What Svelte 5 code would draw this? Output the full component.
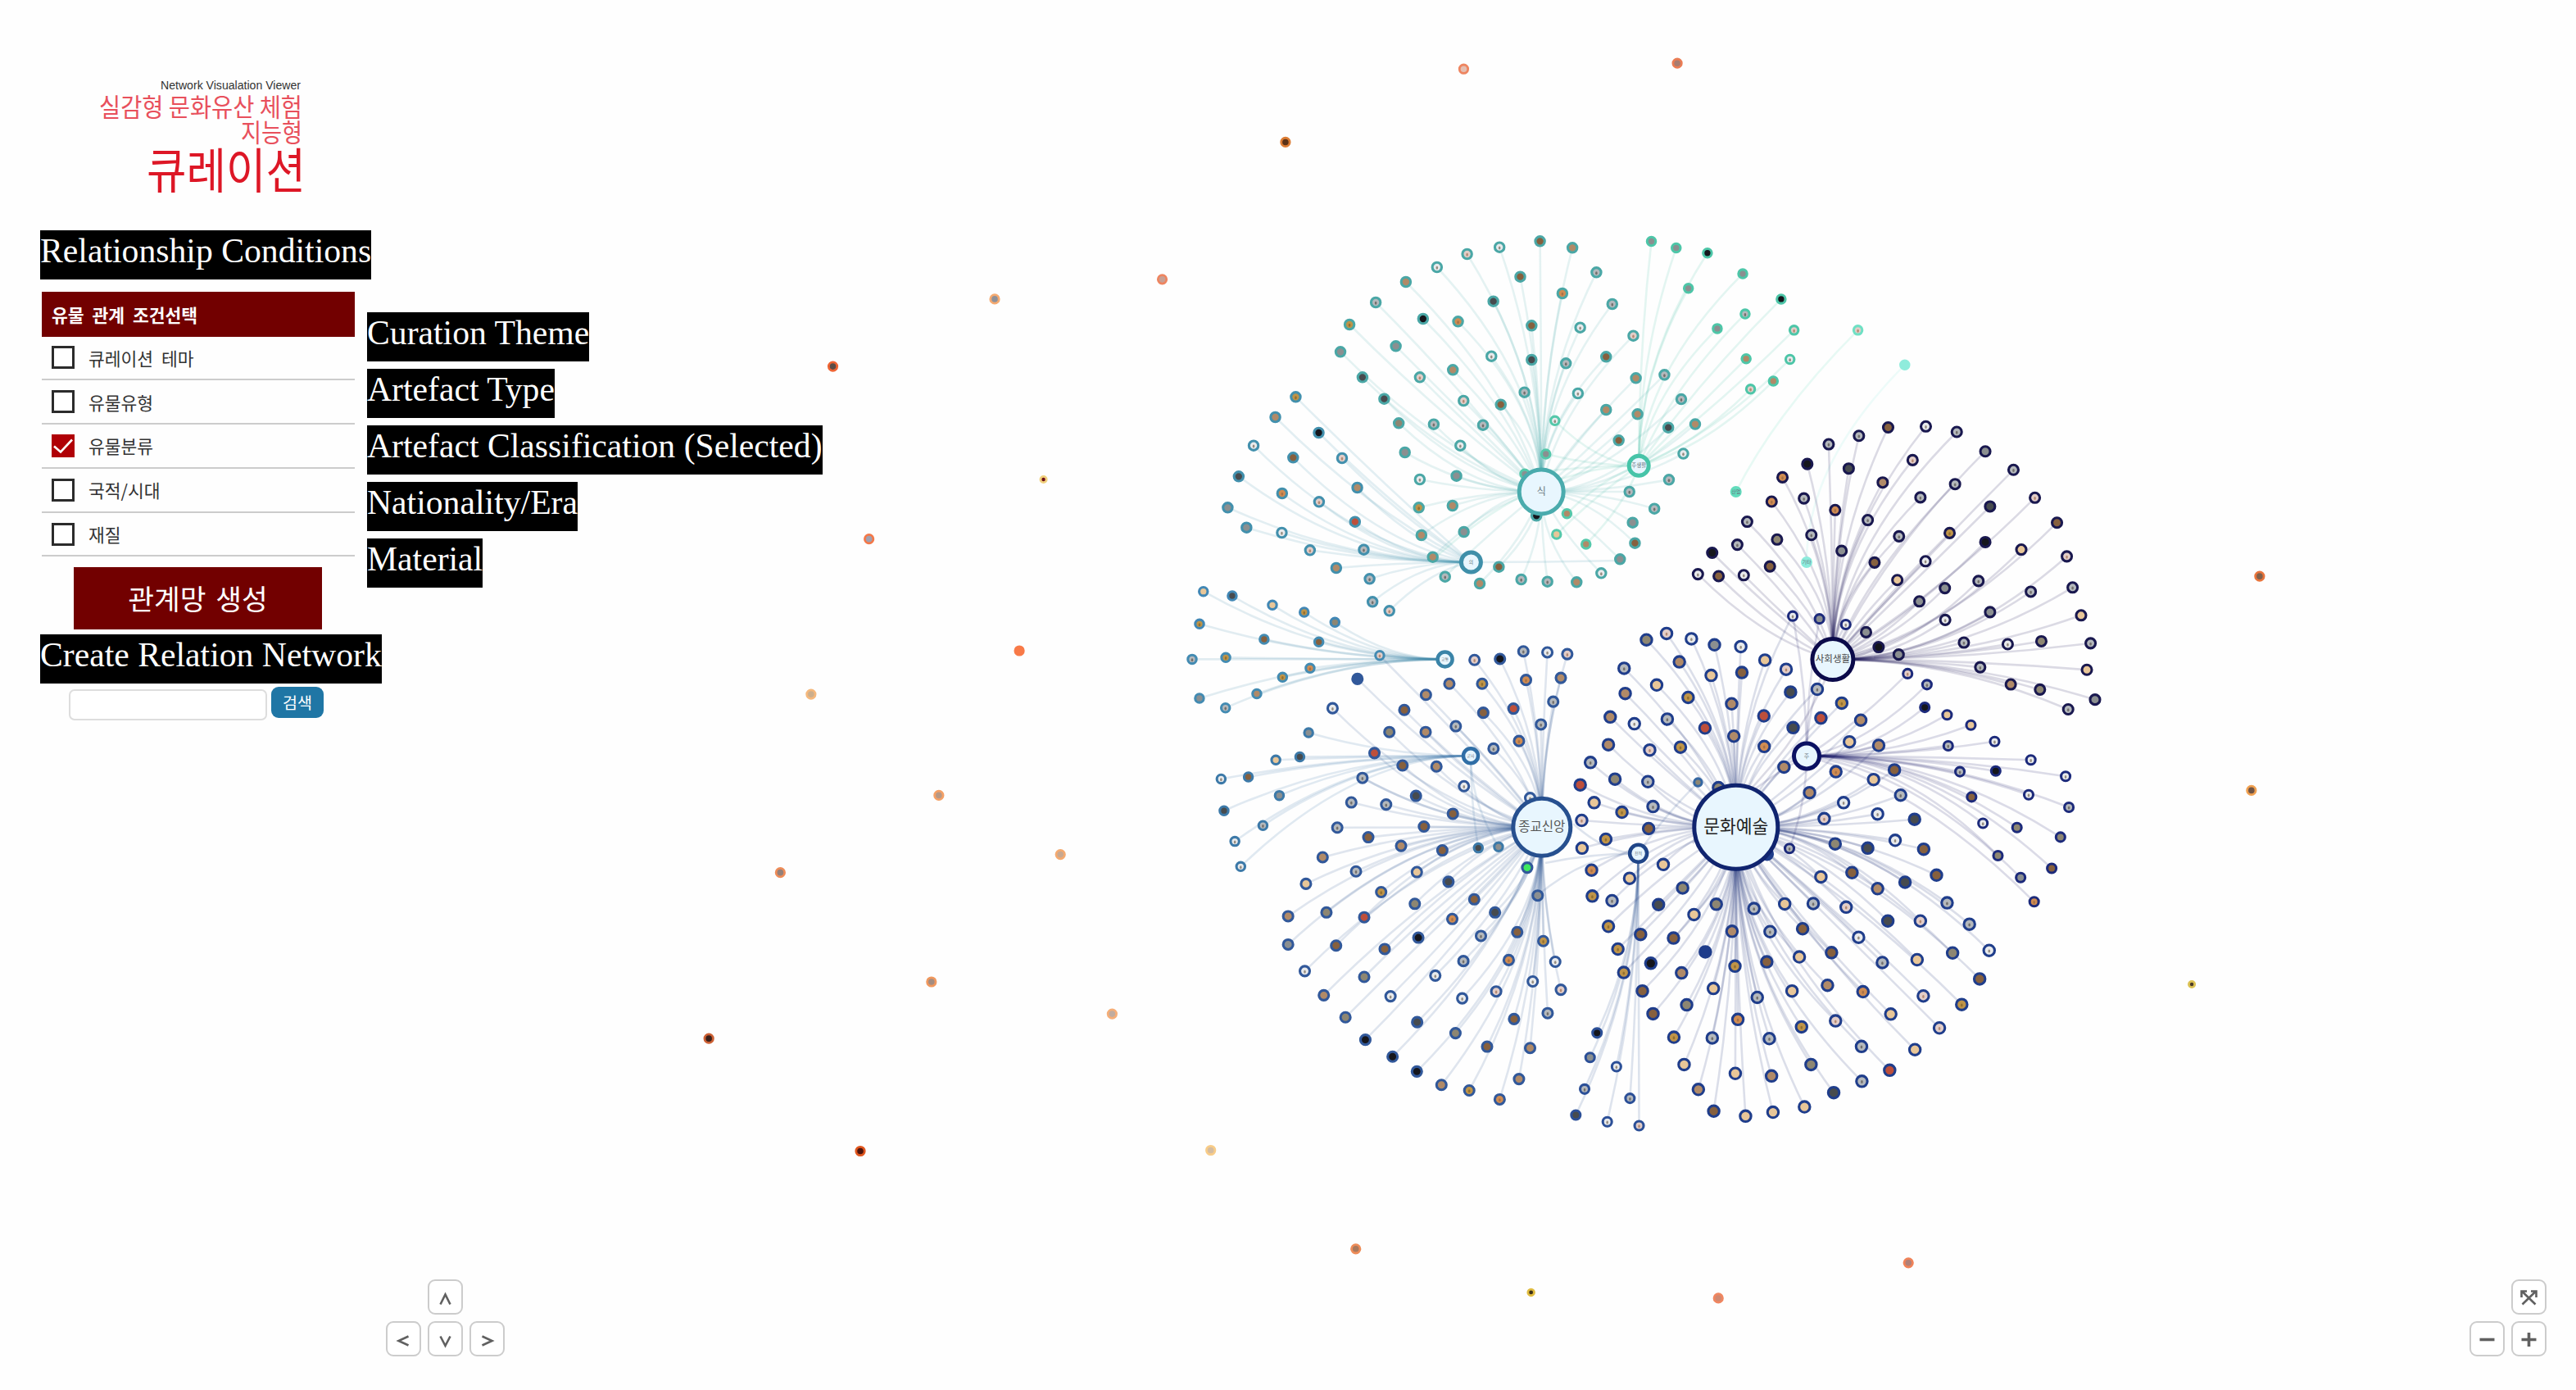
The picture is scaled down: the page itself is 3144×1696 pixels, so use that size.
<script lang="ts">
  interface Hub {
    x: number;
    y: number;
    r: number;
    w: number;
    color: string;
    label: string;
    size: number;
    ink?: string;
  }

  interface Group {
    hub: string;
    ring: string;
    r: number;
    // origin and scale of the tile the points are stored in
    tile: [number, number, number, number];
    points: string;
  }

  interface Dot {
    x: number;
    y: number;
    r: number;
    ring: string;
    fill: string;
    speck: string | null;
  }

  const A: Group["tile"] = [1430, 270, 2.529, 3];
  const B: Group["tile"] = [1950, 270, 2.412, 2.529];
  const C: Group["tile"] = [1430, 740, 2.8, 2.376];
  const D: Group["tile"] = [1880, 720, 2.24, 2.306];

  const hubs: Record<string, Hub> = {
    food: { x: 1881.2, y: 600, r: 27, w: 5, color: "#4aabad", label: "식", size: 12 },
    house: { x: 2000.2, y: 568.3, r: 12, w: 5, color: "#46c4a8", label: "주생활", size: 6.5 },
    tool: { x: 1795.4, y: 686, r: 12, w: 5, color: "#3f8fa9", label: "의", size: 6 },
    trade: { x: 1763.6, y: 804.4, r: 9, w: 4.5, color: "#3a84a8", label: "교통", size: 5 },
    army: { x: 1795, y: 922.3, r: 9, w: 4.5, color: "#2f6ea6", label: "군사", size: 5 },
    faith: { x: 1881.8, y: 1009.2, r: 35, w: 5, color: "#27508f", label: "종교신앙", size: 15.5, ink: "#555" },
    text: { x: 1999.6, y: 1041.3, r: 10.5, w: 4.5, color: "#1f4588", label: "전적", size: 5 },
    art: { x: 2118.8, y: 1009.2, r: 51, w: 5, color: "#10246f", label: "문화예술", size: 21.5, ink: "#222" },
    life: { x: 2205, y: 922.4, r: 15.5, w: 5, color: "#0b1162", label: "주", size: 7 },
    social: { x: 2236.9, y: 804.6, r: 25, w: 5, color: "#0b0a4a", label: "사회생활", size: 11.5, ink: "#444" },
    craft: { x: 2118.7, y: 600, r: 5, w: 4, color: "#62dcbc", label: "산업", size: 6 },
    misc: { x: 2205, y: 686, r: 5, w: 4, color: "#8cecdc", label: "기타", size: 6 },
  };

  const fills: Record<string, string> = {
    w: "#e8eaec",
    l: "#b4b8bc",
    g: "#8b8f90",
    o: "#d08c52",
    b: "#86603e",
    t: "#e8c698",
    y: "#bf9448",
    m: "#8d8672",
    d: "#474b4e",
    k: "#15161c",
    r: "#bd4f3b",
    p: "#e2cdc8",
    n: "#3fe860",
    c: "#b08a68",
  };

  const specks: Record<string, string> = { w: "#958c80", l: "#73706c", p: "#b58a72", o: "#a87248", y: "#94702f" };

  const groups: Group[] = [
    {
      hub: "food",
      ring: "#4aa7a6",
      r: 7,
      tile: A,
      points:
        "1137,73b 1237,97c 1012,95w 912,120p 819,168w 723,222c 630,297l 549,378y 521,478g 589,571d 1076,203b 1311,187l 1206,264o 993,293d 776,357k 884,367o 1360,303l 1111,382b 1261,389w 1425,419p 692,457g 987,494w 1111,507d 1217,520l 1341,496b 868,544c 766,571p 1433,574c 1521,562l 1089,626l 1254,630w 901,657p 1016,671b 656,650d 1341,690c 1438,706c 701,739m 809,743l 961,746l 720,846g 891,821w 879,932g 766,945w 763,1048y 867,1041c 1380,802b 1533,755d 1413,990l 1535,946l 1490,1052l 1423,1103g 1430,1178b 1384,1237g 771,1149c 902,1137g 806,1229c 844,1301l 951,1326c 1010,1265b 1079,1311l 1160,1319l 1250,1321c 1326,1288w 1126,1078k",
    },
    {
      hub: "food",
      ring: "#4aa7a6",
      r: 7,
      tile: B,
      points: "246,549l 287,626c 252,717w",
    },
    {
      hub: "house",
      ring: "#4dc6a8",
      r: 6.5,
      tile: B,
      points:
        "158,62g 231,82g 323,98k 267,207g 427,162g 434,286l 540,240k 352,331g 578,336p 437,424c 566,426w 517,493c 450,518p",
    },
    {
      hub: "house",
      ring: "#55c8aa",
      r: 6.5,
      tile: A,
      points: "1183,730w 1155,852g 1090,925g 1220,1070c 1188,1146t 1279,1182c",
    },
    { hub: "craft", ring: "#6fe0c4", r: 6.5, tile: B, points: "766,336p" },
    { hub: "misc", ring: "#8fecdc", r: 6.5, tile: B, points: "904,443s" },
    {
      hub: "tool",
      ring: "#4290ad",
      r: 7,
      tile: A,
      points:
        "383,643y 320,717c 454,774k 253,821w 375,865b 526,867p 207,934d 573,975c 341,996o 455,1027p 173,1048g 566,1100r 231,1121g 340,1140w 427,1204p 593,1202l 508,1269c 611,1309l 620,1393l 672,1426p",
    },
    {
      hub: "trade",
      ring: "#4187b5",
      r: 6.5,
      tile: A,
      points: "98,1355t 187,1371d 311,1405t 409,1431y 504,1468m 86,1474y",
    },
    {
      hub: "trade",
      ring: "#438bb2",
      r: 6.5,
      tile: C,
      points: "70,153l 185,148y 316,95b 503,103b 95,266g 184,294l 291,253c 379,205y 473,179o 711,142p",
    },
    {
      hub: "army",
      ring: "#3c79a8",
      r: 6.5,
      tile: C,
      points:
        "468,366g 438,436d 356,445t 262,494b 169,500w 368,548g 179,592d 312,635l 216,681w 236,754w 1048,700d 1117,697g",
    },
    {
      hub: "faith",
      ring: "#31589a",
      r: 7.3,
      tile: C,
      points:
        "635,210s 550,295w 1035,155p 1122,152k 1202,130l 1284,133w 1352,138p 949,224c 1061,224y 1211,213o 1330,207c 869,256c 1304,276l 1168,296r 1065,308b 795,300b 1262,342l 971,347l 868,364c 744,364m 1187,390o 1100,412l 693,425r 905,464c 789,461b 652,497l 999,521w 835,549d 614,568l 733,574l 961,601b 566,641l 862,638b 672,669b 784,694c 925,707b 516,727c 630,768l 838,770t 459,804t 946,798d 716,828y 831,862m 1034,849b 398,898c 529,887m 658,901r 1105,887d 959,906o 562,983b 398,980g 843,960k 1057,955l 728,993b 1181,944b 1270,970y 455,1057w 997,1028l 1152,1025o 1311,1030w 658,1074m 901,1070w 520,1127c 748,1130w 1234,1087w 993,1136w 1109,1116p 1330,1111p 594,1191m 839,1205d 1170,1196b 1285,1179l 970,1237m 662,1256k 1078,1276b 1225,1280c 755,1305k 838,1348k 922,1387c 1187,1370c 1017,1403y 1121,1429o 1215,757n 1251,838g 1225,555w",
    },
    {
      hub: "text",
      ring: "#2b4f97",
      r: 6.8,
      tile: D,
      points: "155,1246k 136,1315g 208,1341w 121,1404l 245,1430l 97,1477d 183,1496w 270,1507p",
    },
    {
      hub: "art",
      ring: "#1f3d8b",
      r: 8,
      tile: D,
      points:
        "290,140m 345,122p 413,137w 476,154g 548,159w 614,197t 672,223p 380,202c 467,240t 551,232b 229,220l 318,267t 232,291c 404,302y 523,320c 684,287d 757,279l 824,318y 191,357c 257,376w 347,363l 450,388r 611,354r 767,360r 691,387d 876,366c 186,435c 299,450p 383,442y 529,411c 612,440o 845,427t 925,437c 137,485l 204,532m 294,539l 666,498c 808,511o 968,506b 911,533t 109,548r 147,598t 223,625y 308,609l 736,570c 829,598w 985,577l 113,648p 296,671b 776,643p 922,630w 1023,645d 179,701y 114,726t 806,714m 895,726d 970,704w 1048,729b 140,788o 336,772t 244,811t 767,807t 852,795b 922,840c 997,822d 1083,802b 142,861y 196,874l 389,838m 323,885d 420,913t 481,884m 584,896l 668,883t 746,882l 836,892p 950,931d 1112,880l 186,946y 274,969b 364,979b 524,960c 628,961l 717,953b 870,977w 1039,931p 1173,940l 212,1010y 451,1018s 302,1050k 532,1058y 619,1046b 708,1032t 796,1020b 935,1048l 1030,1040t 1127,1021m 1227,1014w 228,1076y 386,1077c 279,1128b 473,1121t 593,1146l 688,1128t 785,1112c 882,1130o 1047,1142p 1201,1094b 400,1167m 308,1192b 540,1208o 958,1193t 1152,1166y 714,1229y 807,1212p 1091,1232p 365,1258y 470,1260l 626,1262l 878,1284l 1024,1293t 393,1335t 533,1360t 632,1367c 740,1335m 955,1351r 432,1405c 879,1382l 802,1414d 474,1466b 561,1480t 636,1469t 722,1454t 487,556m 620,743s",
    },
    { hub: "text", ring: "#3567a2", r: 6, tile: D, points: "431,541m" },
    {
      hub: "life",
      ring: "#1c2a7b",
      r: 6.8,
      tile: D,
      points:
        "690,73w 763,81g 835,97w 1004,235p 1057,266l 1051,330k 1112,351t 1177,380t 1115,438l 1242,426w 1341,478w 1147,511l 1245,509k 1436,524w 1179,582b 1335,576w 1445,611l 1210,656w 1303,668m 1422,695m 1251,747m 1398,783b 1313,809g 1350,877o 681,727l",
    },
    {
      hub: "social",
      ring: "#19184f",
      r: 7.3,
      tile: B,
      points:
        "855,636b 966,633w 1057,650l 769,662l 680,688l 617,749k 544,790o 927,737p 1141,710g 739,763d 1224,767l 839,806c 1052,811l 512,865o 607,855l 1287,853p 950,852l 699,891o 1155,880d 440,927l 795,922l 1352,930b 1036,962y 629,968l 887,972l 528,982m 1141,990k 411,998l 718,1017g 1247,1013t 337,1023k 1381,1034p 815,1053b 965,1049w 507,1065b 295,1089w 356,1095b 430,1092w 882,1107t 1121,1110l 1022,1132g 1398,1130l 1275,1143l 947,1173g 1155,1206g 1023,1230w 1423,1216t 1078,1300l 1207,1305w 1306,1296m 1451,1302l 1126,1376l 1440,1384t 1216,1429c 1302,1445m 1464,1476g 1385,1506l 827,1314k 886,1337g 790,1268g",
    },
  ];

  // nodes that belong to a second hub as well
  const extra: [string, number, number][] = [
    ["faith", 1684, 800],
    ["faith", 1663, 949],
    ["art", 2188, 751],
    ["text", 1876, 1093],
    ["text", 1920, 1005],
    ["text", 1886, 1053],
    ["life", 2066, 1029],
    ["life", 2178, 936],
    ["life", 2292, 910],
    ["house", 1752, 680],
    ["tool", 1978, 684],
    ["social", 2122, 978],
  ];

  const loose: [number, number, string, string, number?][] = [
    [891, 42, "#ee8560", "#e4bfb2"],
    [1021, 38.5, "#ea7c54", "#a87c70"],
    [782.5, 86.5, "#dc7c34", "#5a3218"],
    [707.5, 170, "#ee8560", "#c8a094"],
    [605.5, 182, "#f5aa70", "#8e9098"],
    [507, 223, "#ee6434", "#5c4c46"],
    [635.2, 291.8, "#f0d07c", "#6c0c18", 4.8],
    [529, 328, "#f47848", "#a0a0b0"],
    [620.5, 396, "#f87a48", "#f87a48"],
    [493.7, 422.5, "#f5b87c", "#ccae8c"],
    [571.5, 484, "#f4a066", "#b89884"],
    [645.5, 520, "#f4aa70", "#c8a890"],
    [475, 531, "#ee8c58", "#94807a"],
    [567, 597.5, "#f0985e", "#a48c80"],
    [677, 617, "#f5ae78", "#c0aca0"],
    [431.5, 632, "#cc6034", "#3a201a"],
    [523.7, 700.5, "#e0561e", "#4c140e"],
    [737, 700, "#f8cc88", "#d4bca0"],
    [825.3, 760, "#ee8c58", "#a8785c"],
    [932, 786.5, "#e0bc40", "#3c3018", 5],
    [1046, 790, "#f08660", "#d08870"],
    [1161.7, 768.5, "#f08258", "#b08078"],
    [1334.2, 599, "#dcc254", "#4c3c28", 4.8],
    [1370.5, 481, "#f0a050", "#705444"],
    [1375.5, 350.7, "#e8743c", "#80604c"],
  ];

  // the control point sits on the diagonal from the node, never past the hub
  const curve = (x: number, y: number, hub: Hub): string => {
    const dx = hub.x - x;
    const dy = hub.y - y;
    const step = Math.max(Math.abs(dx), Math.abs(dy)) / 2;
    const cx = x + Math.sign(dx) * Math.min(step, Math.abs(dx));
    const cy = y + Math.sign(dy) * Math.min(step, Math.abs(dy));
    return `M${x.toFixed(1)} ${y.toFixed(1)}Q${cx.toFixed(1)} ${cy.toFixed(1)} ${hub.x} ${hub.y}`;
  };

  const dots: Dot[] = [];
  const edges: { d: string; color: string }[] = [];

  for (const group of groups) {
    const [ox, oy, kx, ky] = group.tile;
    const hub = hubs[group.hub];
    for (const point of group.points.split(" ")) {
      const code = point.slice(-1);
      const [px, py] = point.slice(0, -1).split(",").map(Number);
      const x = ox + px / kx;
      const y = oy + py / ky;
      dots.push({
        x,
        y,
        r: group.r - 1.3,
        ring: group.ring,
        fill: code === "s" ? group.ring : fills[code],
        speck: specks[code] || null,
      });
      edges.push({ d: curve(x, y, hub), color: hub.color });
    }
  }

  for (const [id, x, y] of extra) {
    edges.push({ d: curve(x, y, hubs[id]), color: hubs[id].color });
  }

  let conditions = [
    { name: "큐레이션 테마", note: "Curation Theme", checked: false },
    { name: "유물유형", note: "Artefact Type", checked: false },
    { name: "유물분류", note: "Artefact Classification (Selected)", checked: true },
    { name: "국적/시대", note: "Nationality/Era", checked: false },
    { name: "재질", note: "Material", checked: false },
  ];

  let keyword = "";

  const toggle = (index: number) => {
    conditions[index].checked = !conditions[index].checked;
  };
</script>

<main class="viewer">
  <svg class="network" viewBox="0 0 3144 1696">
    <g class="edges">
      {#each edges as edge}
        <path d={edge.d} stroke={edge.color} />
      {/each}
    </g>
    {#each dots as dot}
      <circle cx={dot.x} cy={dot.y} r={dot.r} fill={dot.fill} stroke={dot.ring} stroke-width="3.1" />
      {#if dot.speck}
        <ellipse cx={dot.x} cy={dot.y + 0.8} rx="1.3" ry="2" fill={dot.speck} />
      {/if}
    {/each}
    {#each loose as [x, y, ring, fill, r]}
      <circle cx={x * 2.005} cy={y * 2.005} r={(r || 6.4) - 1.2} {fill} stroke={ring} stroke-width="2.8" />
    {/each}
    {#each Object.values(hubs) as hub}
      <circle cx={hub.x} cy={hub.y} r={hub.r} fill={hub.r < 6 ? hub.color : "#e8f6fe"} stroke={hub.color} stroke-width={hub.w} />
      <text x={hub.x} y={hub.y + hub.size * 0.3} font-size={hub.size} fill={hub.ink || "#6a7680"}>{hub.label}</text>
    {/each}
  </svg>

  <aside class="panel">
    <svg class="logo" viewBox="0 0 250 165">
      <text x="74" y="18" font-size="15.5" textLength="171" lengthAdjust="spacingAndGlyphs" class="small">Network Visualation Viewer</text>
      <text x="-1" y="50.5" font-size="31" textLength="248" lengthAdjust="spacingAndGlyphs" class="light">실감형 문화유산 체험</text>
      <text x="172" y="82" font-size="31" textLength="75" lengthAdjust="spacingAndGlyphs" class="light">지능형</text>
      <text x="57" y="139" font-size="59" textLength="194" lengthAdjust="spacingAndGlyphs">큐레이션</text>
    </svg>

    <p class="note title">Relationship Conditions</p>

    <section class="conditions">
      <h2>유물 관계 조건선택</h2>
      <ul>
        {#each conditions as condition, i}
          <li>
            <button class="check" class:checked={condition.checked} aria-label={condition.name} on:click={() => toggle(i)}>
              {#if condition.checked}
                <svg viewBox="0 0 28 28"><path d="M3 14.5L11 21.5L25 6.5" /></svg>
              {/if}
            </button>
            <span>{condition.name}</span>
          </li>
        {/each}
      </ul>
      <div class="notes">
        {#each conditions as condition}
          <p class="note">{condition.note}</p>
        {/each}
      </div>
    </section>

    <button class="create">관계망 생성</button>
    <p class="note">Create Relation Network</p>

    <form class="search" on:submit|preventDefault>
      <input type="text" bind:value={keyword} />
      <button>검색</button>
    </form>
  </aside>

  <nav class="move">
    <button class="up"><svg viewBox="0 0 43 43"><path d="M15.5 30.5L21.5 18.5L27.5 30.5" /></svg></button>
    <button><svg viewBox="0 0 43 43"><path d="M27.5 18.5L15.5 24L27.5 29.5" /></svg></button>
    <button><svg viewBox="0 0 43 43"><path d="M15.5 18.5L21.5 30L27.5 18.5" /></svg></button>
    <button><svg viewBox="0 0 43 43"><path d="M15.5 18.5L27.5 24L15.5 29.5" /></svg></button>
  </nav>

  <nav class="zoom">
    <button class="fit">
      <svg viewBox="0 0 43 43"><path d="M13.5 30.5L29.5 15M29.5 30.5L13.5 15M12.5 22V14.5H19M24 14.5H30.5V22" /></svg>
    </button>
    <button><svg viewBox="0 0 43 43"><path class="bold" d="M12.5 22.5H30.5" /></svg></button>
    <button><svg viewBox="0 0 43 43"><path class="bold" d="M12.5 22.5H30.5M21.5 14V31" /></svg></button>
  </nav>
</main>

<style>
  :global(body) {
    background-color: #fefefe;
  }

  .viewer {
    position: relative;
    width: 3144px;
    height: 1696px;
    overflow: hidden;
    font-family: "Noto Sans CJK KR", sans-serif;
  }

  .network {
    position: absolute;
    inset: 0;
    width: 100%;
    height: 100%;
  }

  .edges path {
    fill: none;
    stroke-width: 2.6;
    stroke-opacity: 0.145;
  }

  .network text {
    text-anchor: middle;
  }

  .panel {
    position: relative;
    box-sizing: border-box;
    width: 470px;
    padding: 91px 0 0 49px;
    display: flex;
    flex-direction: column;
    align-items: flex-start;
  }

  .logo {
    width: 250px;
    height: 165px;
    margin: 0 0 25px 73px;
    overflow: visible;
    fill: #dd1726;
  }

  .logo .small {
    fill: #333;
    font-family: "Liberation Sans", sans-serif;
  }

  .logo .light {
    fill: #e8505c;
  }

  .note {
    margin: 0;
    height: 50px;
    padding-bottom: 10px;
    background-color: #000;
    color: #fff;
    font: 41.7px/50px "Liberation Serif", serif;
    white-space: nowrap;
  }

  .title {
    margin-bottom: 14.5px;
  }

  .conditions {
    position: relative;
    width: 382px;
    margin-left: 2px;
  }

  h2 {
    margin: 0;
    padding-left: 12px;
    background-color: #720000;
    color: #fff;
    font-size: 21.5px;
    font-weight: bold;
    line-height: 55px;
    word-spacing: 5px;
  }

  ul {
    margin: 0;
    padding: 0;
    list-style: none;
  }

  li {
    display: flex;
    align-items: center;
    gap: 17px;
    box-sizing: border-box;
    height: 53.8px;
    padding-left: 12px;
    border-bottom: 2px solid #ccc;
    color: #333;
    font-size: 21.5px;
    word-spacing: 5px;
  }

  .check {
    box-sizing: border-box;
    width: 28px;
    height: 28px;
    padding: 0;
    border: 3px solid #2b2b2b;
    background-color: #fff;
  }

  .check.checked {
    border: 0;
    background-color: #b00006;
  }

  .check svg {
    display: block;
    fill: none;
    stroke: #fff;
    stroke-width: 2.6;
  }

  .notes {
    position: absolute;
    top: 25px;
    left: 397px;
    display: flex;
    flex-direction: column;
    align-items: flex-start;
    gap: 9px;
  }

  .create {
    width: 303px;
    height: 76px;
    margin: 13px 0 5.5px 41px;
    padding: 0 0 2px;
    border: 0;
    background-color: #720000;
    color: #fff;
    font: 34.5px "Noto Sans CJK KR", sans-serif;
    word-spacing: 4px;
  }

  .search {
    display: flex;
    gap: 5px;
    margin: 4px 0 0 35px;
  }

  .search input {
    box-sizing: border-box;
    width: 242px;
    height: 38px;
    margin-top: 3px;
    border: 2px solid #ddd;
    border-radius: 7px;
    background-color: #fff;
  }

  .search button {
    width: 64px;
    height: 38px;
    padding: 0;
    border: 0;
    border-radius: 9px;
    background-color: #1f76a5;
    color: #fff;
    font: 19.5px "Noto Sans CJK KR", sans-serif;
  }

  .move,
  .zoom {
    position: absolute;
    bottom: 41px;
    display: grid;
    gap: 8px;
  }

  .move {
    left: 471px;
    grid-template-columns: repeat(3, 43px);
  }

  .zoom {
    right: 36px;
    grid-template-columns: repeat(2, 43px);
  }

  .up,
  .fit {
    grid-column: 2;
  }

  .move button:nth-child(2) {
    grid-column: 1;
  }

  nav button {
    box-sizing: border-box;
    width: 43px;
    height: 43px;
    padding: 0;
    border: 2px solid #ccc;
    border-radius: 9px;
    background-color: #fff;
  }

  nav svg {
    display: block;
    margin: -2px;
    width: 43px;
    height: 43px;
    fill: none;
    stroke: #606060;
    stroke-width: 2.6;
  }

  nav .bold {
    stroke-width: 3.6;
  }
</style>
